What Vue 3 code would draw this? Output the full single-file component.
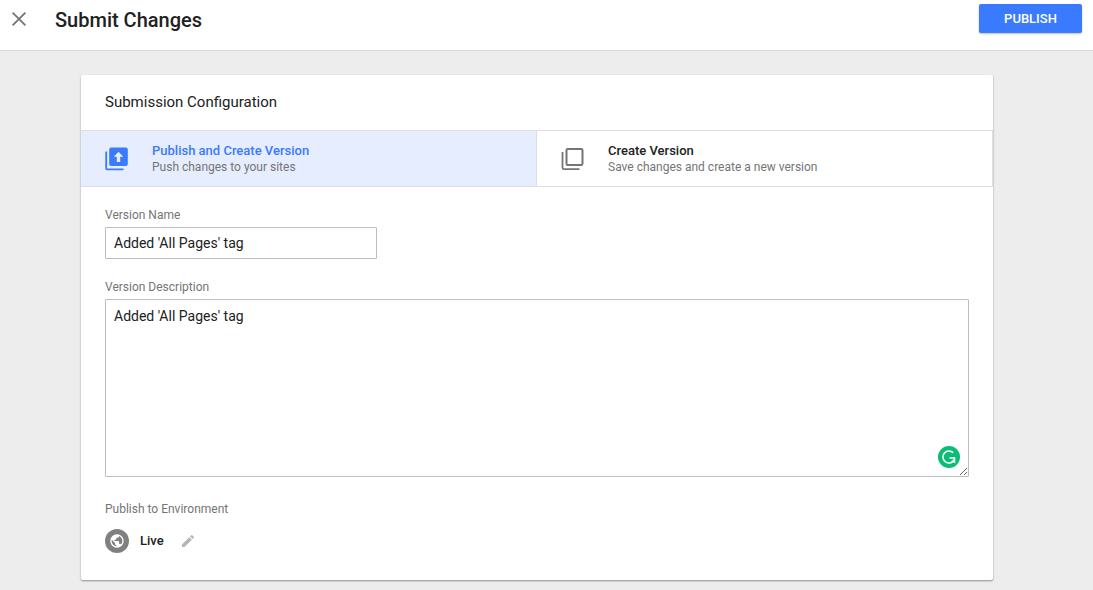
<script setup>
import { ref } from 'vue'

const mode = ref('publish')
const versionName = ref("Added 'All Pages' tag")
const description = ref("Added 'All Pages' tag")
</script>

<template>
  <div class="page">
    <header class="topbar">
      <button class="icon-button" type="button" aria-label="Close">
        <svg width="24" height="24" viewBox="0 0 24 24" fill="none" stroke="#757575" stroke-width="1.8">
          <path d="M5.6 5.6 18.4 18.4M18.4 5.6 5.6 18.4" />
        </svg>
      </button>
      <h1>Submit Changes</h1>
      <button class="publish" type="button">PUBLISH</button>
    </header>

    <main>
      <form class="card" @submit.prevent>
        <h2>Submission Configuration</h2>

        <div class="options">
          <button type="button" class="option" :class="{ selected: mode === 'publish' }"
            :aria-pressed="mode === 'publish'" @click="mode = 'publish'">
            <svg width="24" height="24" viewBox="0 0 24 24" fill="currentColor">
              <path d="M1.300 4.500v17a1.700 1.700 0 0 0 1.700 1.700h16.500v-1.700H3.100v-17z" />
              <path fill-rule="evenodd" d="M7.200 0.500h14.600a2 2 0 0 1 2 2v14.500a2 2 0 0 1-2 2H7.200a2 2 0 0 1-2-2V2.500a2 2 0 0 1 2-2zM14.500 4.800l-4.700 5h3V15h3.400V9.800h3z" />
            </svg>
            <span class="option-text">
              <strong>Publish and Create Version</strong>
              <span>Push changes to your sites</span>
            </span>
          </button>
          <button type="button" class="option" :class="{ selected: mode === 'create' }"
            :aria-pressed="mode === 'create'" @click="mode = 'create'">
            <svg width="24" height="24" viewBox="0 0 24 24" fill="none" stroke="currentColor">
              <rect x="6.500" y="2" width="16" height="16" rx="1.200" stroke-width="2" />
              <path d="M2.500 5v15.700A1.500 1.500 0 0 0 4 22.200H19.500" stroke-width="1.800" />
            </svg>
            <span class="option-text">
              <strong>Create Version</strong>
              <span>Save changes and create a new version</span>
            </span>
          </button>
        </div>

        <div class="fields">
          <div class="field">
            <label for="version-name">Version Name</label>
            <input id="version-name" v-model="versionName" type="text">
          </div>

          <div class="field">
            <label for="version-description">Version Description</label>
            <div class="editor">
              <textarea id="version-description" v-model="description" spellcheck="false"></textarea>
              <button class="checker" type="button" aria-label="Check grammar">
                <svg width="22" height="22" viewBox="0 0 22 22" fill="none">
                  <circle cx="11" cy="11" r="11" fill="#0bbd74" />
                  <path d="M15.200 6.800A6 6 0 1 0 14.800 15.600M11.500 12H16.500" stroke="#fff" stroke-width="1.600" />
                  <path d="M17.300 11.200V17.200L12.800 15.200 15.500 13.800V11.200z" fill="#fff" />
                </svg>
              </button>
            </div>
          </div>

          <section class="environment">
            <h3>Publish to Environment</h3>
            <div class="environment-row">
              <svg width="24" height="24" viewBox="0 0 24 24">
                <circle cx="12" cy="12" r="12" fill="#808080" />
                <g transform="translate(4 4) scale(.667)" fill="#fff">
                  <path d="M12 2C6.480 2 2 6.480 2 12s4.480 10 10 10 10-4.480 10-10S17.520 2 12 2zm-1 17.930c-3.950-.49-7-3.850-7-7.930 0-.62.080-1.210.21-1.790L9 15v1c0 1.100.9 2 2 2v1.930zm6.900-2.540c-.26-.81-1-1.390-1.900-1.390h-1v-3c0-.55-.45-1-1-1H8v-2h2c.55 0 1-.45 1-1V7h2c1.100 0 2-.9 2-2v-.41c2.930 1.190 5 4.060 5 7.410 0 2.080-.8 3.970-2.100 5.390z" />
                </g>
              </svg>
              <strong>Live</strong>
              <button class="icon-button" type="button" aria-label="Edit environment">
                <svg width="16" height="16" viewBox="0 0 24 24" fill="#b5b5b5">
                  <path d="M3 17.250V21h3.750L17.810 9.940l-3.750-3.750L3 17.250zM20.710 7.040a1 1 0 0 0 0-1.410l-2.340-2.340a1 1 0 0 0-1.410 0l-1.830 1.830 3.750 3.750 1.830-1.830z" />
                </svg>
              </button>
            </div>
          </section>
        </div>
      </form>
    </main>
  </div>
</template>

<style>
body {
  background: #ededed;
}
</style>

<style scoped>
.page {
  color: #212121;
  font-family: Roboto, "Liberation Sans", sans-serif;
  font-size: 12px;
  line-height: 16px;
}

.page *,
.page {
  box-sizing: border-box;
}

button,
input,
textarea {
  font: inherit;
  color: inherit;
}

h1,
h2,
h3 {
  margin: 0;
}

strong {
  font-weight: 500;
}

svg {
  display: block;
  flex: none;
}

.topbar {
  display: flex;
  align-items: flex-start;
  padding: 4px 11px 13px 7px;
  background: #fff;
  border-bottom: 1px solid #dcdcdc;
}

.icon-button {
  padding: 0;
  border: 0;
  background: none;
}

.topbar .icon-button {
  margin: 3px 24px 0 0;
}

h1 {
  flex: 1;
  font-size: 20px;
  font-weight: 500;
  line-height: 33px;
}

.publish {
  min-width: 103px;
  height: 29px;
  padding: 0 16px;
  border: 0;
  border-radius: 2px;
  background: #3a7afe;
  box-shadow: 0 1px 2px rgba(0, 0, 0, .25);
  color: #fff;
  font-size: 13px;
  font-weight: 500;
}

main {
  padding: 24px 100px 10px 81px;
}

.card {
  background: #fff;
  border-radius: 2px;
  box-shadow: 0 1px 2px rgba(0, 0, 0, .4);
}

h2 {
  padding: 15px 24px 16px;
  font-size: 15px;
  font-weight: 400;
  line-height: 24px;
}

.options {
  display: grid;
  grid-template-columns: 1fr 1fr;
  border-top: 1px solid #dedede;
  border-bottom: 1px solid #dedede;
}

.option {
  display: flex;
  align-items: center;
  gap: 24px;
  height: 55px;
  padding: 0 23px;
  border: 0;
  border-right: 1px solid #dedede;
  background: #fff;
  text-align: left;
}

.option svg {
  color: #757575;
}

.option.selected {
  background: #e6edfe;
}

.option.selected svg,
.option.selected strong {
  color: #3a7afe;
}

.option-text {
  display: grid;
}

.option-text strong {
  font-size: 13px;
}

.option-text span,
label,
h3 {
  color: #757575;
  font-size: 12px;
  font-weight: 400;
}

.fields {
  display: grid;
  gap: 20px;
  padding: 20px 24px 27px;
}

.field label {
  display: block;
  margin-bottom: 4px;
}

input,
textarea {
  display: block;
  border: 1px solid #bdbdbd;
  border-radius: 1px;
  background: #fff;
  font-size: 14px;
}

input {
  width: 272px;
  height: 32px;
  padding: 0 8px;
}

.editor {
  position: relative;
}

textarea {
  width: 100%;
  height: 178px;
  padding: 8px;
  resize: vertical;
}

.checker {
  position: absolute;
  right: 9px;
  bottom: 9px;
  padding: 0;
  border: 0;
  background: none;
}

.environment {
  padding-top: 4px;
}

.environment-row {
  display: flex;
  align-items: center;
  gap: 11px;
  margin-top: 12px;
}

.environment-row strong {
  font-size: 13px;
}

.environment-row .icon-button {
  margin-left: 5px;
}
</style>
